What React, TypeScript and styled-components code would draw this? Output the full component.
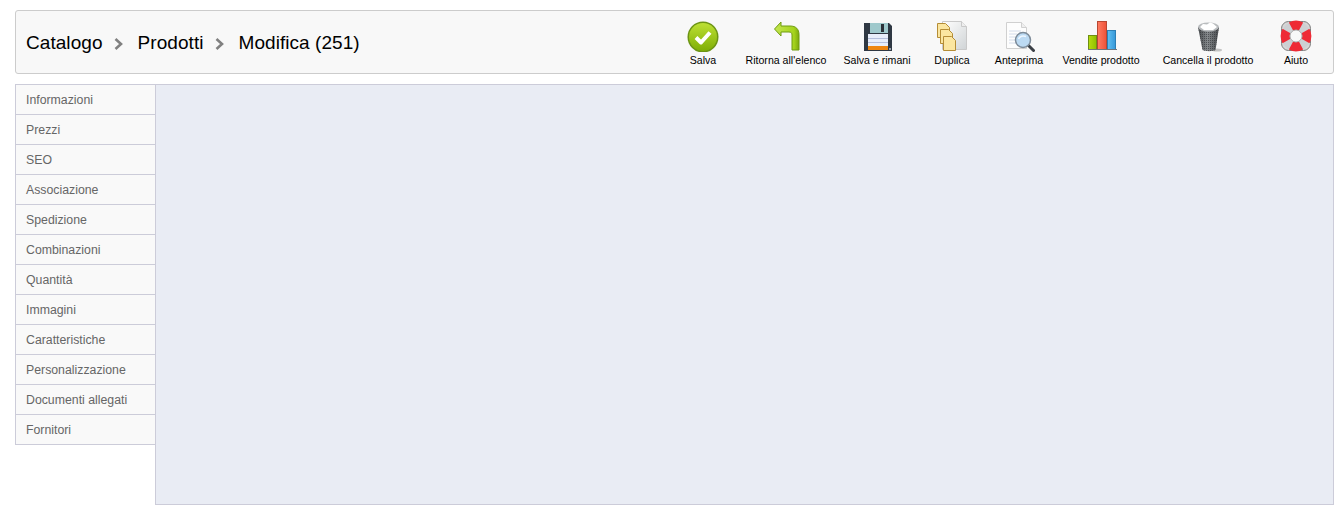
import React from "react";
import styled, { createGlobalStyle } from "styled-components";

const GlobalStyle = createGlobalStyle`
  html, body {
    margin: 0;
    padding: 0;
    background: #fff;
    font-family: "Liberation Sans", Arial, sans-serif;
  }
`;

const Page = styled.div`
  padding: 10px 10px 10px 15px;
  box-sizing: border-box;
  width: 1344px;
  height: 515px;
  overflow: hidden;
`;

const Toolbar = styled.header`
  display: flex;
  align-items: center;
  justify-content: space-between;
  box-sizing: border-box;
  height: 64px;
  padding: 0 8px 0 10px;
  background: #f8f8f8;
  border: 1px solid #cccccc;
  border-radius: 3px;
`;

const Breadcrumb = styled.div`
  display: flex;
  align-items: center;
  margin-top: 1px;
  font-size: 19px;
  letter-spacing: 0.06px;
  color: #000;
`;

const Chevron = styled.svg`
  display: block;
  margin: 2px 15px 0 11px;
`;

const Tools = styled.nav`
  display: flex;
  align-self: flex-start;
`;

const Tool = styled.a<{ $w: number }>`
  display: flex;
  flex-direction: column;
  align-items: center;
  width: ${(p) => p.$w}px;
  padding-top: 9px;
  font-size: 10.6px;
  line-height: 12px;
  color: #000;
  white-space: nowrap;

  svg {
    display: block;
    margin-bottom: 2px;
  }
`;

const Body = styled.div`
  display: flex;
  margin-top: 10px;
`;

const Tabs = styled.ul`
  list-style: none;
  box-sizing: border-box;
  margin: 0;
  padding: 0;
  width: 140px;
  flex: none;
  align-self: flex-start;
  border-left: 1px solid #ccccd9;
`;

const Tab = styled.li`
  box-sizing: border-box;
  height: 30px;
  padding-left: 10px;
  font-size: 12.3px;
  line-height: 30px;
  color: #666666;
  background: #f9f9f9;
  border-bottom: 1px solid #ccccd9;

  &:first-child {
    height: 31px;
    border-top: 1px solid #ccccd9;
  }
`;

const Panel = styled.main`
  flex: 1;
  box-sizing: border-box;
  height: 421px;
  background: #e9ecf4;
  border: 1px solid #ccccd9;
`;

const SaveIcon = () => (
  <svg width="32" height="32" viewBox="0 0 32 32">
    <defs>
      <linearGradient id="saveFill" x1="0" y1="0" x2="0" y2="1">
        <stop offset="0" stopColor="#bde034" />
        <stop offset="1" stopColor="#7fae06" />
      </linearGradient>
    </defs>
    <circle cx="16" cy="17" r="15.5" fill="#6c9414" />
    <circle cx="16" cy="17" r="14" fill="url(#saveFill)" />
    <path d="M9 17.5l5 5 9-10" fill="none" stroke="#fff" strokeWidth="4" strokeLinejoin="round" />
  </svg>
);

const BackIcon = () => (
  <svg width="32" height="32" viewBox="0 0 32 32">
    <defs>
      <linearGradient id="backFill" x1="0" y1="0" x2="1" y2="0">
        <stop offset="0" stopColor="#c4e650" />
        <stop offset="0.8" stopColor="#a5d31c" />
        <stop offset="1" stopColor="#7da80e" />
      </linearGradient>
    </defs>
    <path
      d="M4.5 9L11 2v4h9c6 0 9 3 9 9v15h-7V15c0-2-1-3-3-3h-8v4z"
      fill="url(#backFill)"
      stroke="#6f9c10"
      strokeWidth="1"
      strokeLinejoin="round"
    />
  </svg>
);

const DiskIcon = () => (
  <svg width="32" height="32" viewBox="0 0 32 32">
    <path d="M3 3h25l3 3v25H3z" fill="#2f3843" />
    <rect x="9" y="3" width="18" height="10" fill="#9fc9cc" />
    <rect x="20" y="4" width="3" height="8" fill="#2b3138" />
    <rect x="7" y="14" width="20" height="14" fill="#e8eefa" />
    <path d="M7 18.5h20M7 22.5h20" stroke="#b4bfdc" strokeWidth="1" />
    <rect x="7" y="26" width="20" height="4" fill="#ee8610" />
    <rect x="28" y="28" width="2" height="2" fill="#9aa2ac" />
  </svg>
);

const Sheet = ({ x, y }: { x: number; y: number }) => (
  <path
    d={`M${x} ${y}h8l4 4v10h-12z`}
    fill="#fbe6a0"
    stroke="#b58d36"
    strokeWidth="1"
  />
);

const CopyIcon = () => (
  <svg width="32" height="32" viewBox="0 0 32 32">
    <defs>
      <linearGradient id="copyFill" x1="0" y1="0" x2="1" y2="1">
        <stop offset="0" stopColor="#ffffff" />
        <stop offset="1" stopColor="#d0d4d6" />
      </linearGradient>
    </defs>
    <path d="M6.5 1.5h19l5 5v23h-24z" fill="url(#copyFill)" stroke="#c9c9c9" strokeWidth="1" />
    <path d="M25.5 1.5v5h5" fill="#eeeeee" stroke="#c9c9c9" strokeWidth="1" />
    <Sheet x={1.5} y={3.5} />
    <Sheet x={4.5} y={9.5} />
    <Sheet x={7.5} y={16.5} />
  </svg>
);

const PreviewIcon = () => (
  <svg width="32" height="32" viewBox="0 0 32 32">
    <path d="M3.5 2.5h15l5 5v21h-20z" fill="#fdfdfd" stroke="#d0d0d0" strokeWidth="1" />
    <path d="M18.5 2.5v5h5" fill="#efefef" stroke="#d0d0d0" strokeWidth="1" />
    <path d="M6 11h12M6 14h8M6 17h6M6 20h6M6 23h7" stroke="#d4dcea" strokeWidth="1" />
    <path d="M25.5 25.5l5 5" stroke="#3a3f45" strokeWidth="3" strokeLinecap="round" />
    <circle cx="20" cy="20" r="7.5" fill="#bcdaf3" stroke="#7d8b99" strokeWidth="1.5" />
    <path d="M15.5 19c1-2.500 4.500-4 7.500-2.500" fill="none" stroke="#eef7ff" strokeWidth="1.5" />
  </svg>
);

const ChartIcon = () => (
  <svg width="32" height="32" viewBox="0 0 32 32">
    <defs>
      <linearGradient id="barGreen" x1="0" y1="0" x2="1" y2="0">
        <stop offset="0" stopColor="#b6dc10" />
        <stop offset="1" stopColor="#8fbf00" />
      </linearGradient>
      <linearGradient id="barRed" x1="0" y1="0" x2="1" y2="0">
        <stop offset="0" stopColor="#ff7c62" />
        <stop offset="1" stopColor="#ee5238" />
      </linearGradient>
      <linearGradient id="barBlue" x1="0" y1="0" x2="1" y2="0">
        <stop offset="0" stopColor="#62c0f2" />
        <stop offset="1" stopColor="#3597d8" />
      </linearGradient>
    </defs>
    <rect x="3.5" y="15.5" width="8" height="14" fill="url(#barGreen)" stroke="#6f8f12" strokeWidth="1" />
    <rect x="12.5" y="1.5" width="9" height="28" fill="url(#barRed)" stroke="#b84732" strokeWidth="1" />
    <rect x="22.5" y="10.5" width="8" height="19" fill="url(#barBlue)" stroke="#2d7fb4" strokeWidth="1" />
    <rect x="3" y="29" width="29" height="1" fill="#6f757c" />
  </svg>
);

const TrashIcon = () => (
  <svg width="32" height="32" viewBox="0 0 32 32">
    <defs>
      <linearGradient id="binFill" x1="0" y1="0" x2="1" y2="0">
        <stop offset="0" stopColor="#45484b" />
        <stop offset="0.45" stopColor="#85898c" />
        <stop offset="1" stopColor="#484b4e" />
      </linearGradient>
      <pattern id="binMesh" width="2" height="2" patternUnits="userSpaceOnUse">
        <rect width="1" height="1" fill="#2e3033" opacity="0.6" />
      </pattern>
    </defs>
    <ellipse cx="25" cy="30" rx="5" ry="1.5" fill="#c4c4c4" />
    <path d="M6 7l4.500 23c3 1.500 10 1.500 13 0L27 7z" fill="url(#binFill)" />
    <path d="M6 7l4.500 23c3 1.500 10 1.500 13 0L27 7z" fill="url(#binMesh)" />
    <ellipse cx="16.5" cy="7" rx="10.500" ry="4.500" fill="#b9bcbe" />
    <path d="M8 7l3-3 4 .5 3-2 3 1 4 3.500-4 3-9 0z" fill="#ffffff" />
  </svg>
);

const HelpIcon = () => (
  <svg width="32" height="32" viewBox="0 0 32 32">
    <rect x="1.5" y="1.5" width="29" height="29" rx="7" fill="#d6d6d6" stroke="#7e7e7e" strokeWidth="1" />
    <circle cx="16" cy="16" r="10.5" fill="none" stroke="#cdd0d3" strokeWidth="9" />
    <g fill="none" stroke="#ee2a35" strokeWidth="9">
      <path d="M11 6.500a10.500 10.500 0 0 1 10 0" />
      <path d="M25.500 11a10.500 10.500 0 0 1 0 10" />
      <path d="M21 25.500a10.500 10.500 0 0 1-10 0" />
      <path d="M6.500 21a10.500 10.500 0 0 1 0-10" />
    </g>
    <circle cx="16" cy="16" r="6" fill="#f8f8f8" stroke="#9a9a9a" strokeWidth="0.8" />
  </svg>
);

const tools = [
  { label: "Salva", w: 68, icon: <SaveIcon /> },
  { label: "Ritorna all'elenco", w: 98, icon: <BackIcon /> },
  { label: "Salva e rimani", w: 84, icon: <DiskIcon /> },
  { label: "Duplica", w: 66, icon: <CopyIcon /> },
  { label: "Anteprima", w: 68, icon: <PreviewIcon /> },
  { label: "Vendite prodotto", w: 96, icon: <ChartIcon /> },
  { label: "Cancella il prodotto", w: 118, icon: <TrashIcon /> },
  { label: "Aiuto", w: 58, icon: <HelpIcon /> },
];

const tabs = [
  "Informazioni",
  "Prezzi",
  "SEO",
  "Associazione",
  "Spedizione",
  "Combinazioni",
  "Quantità",
  "Immagini",
  "Caratteristiche",
  "Personalizzazione",
  "Documenti allegati",
  "Fornitori",
];

const Arrow = () => (
  <Chevron width="9" height="12" viewBox="0 0 9 12">
    <path d="M1.5 1l5.500 5-5.500 5" fill="none" stroke="#808080" strokeWidth="2.6" />
  </Chevron>
);

export default function App() {
  return (
    <Page>
      <GlobalStyle />
      <Toolbar>
        <Breadcrumb>
          Catalogo
          <Arrow />
          Prodotti
          <Arrow />
          Modifica (251)
        </Breadcrumb>
        <Tools>
          {tools.map((t) => (
            <Tool key={t.label} $w={t.w}>
              {t.icon}
              {t.label}
            </Tool>
          ))}
        </Tools>
      </Toolbar>
      <Body>
        <Tabs>
          {tabs.map((t) => (
            <Tab key={t}>{t}</Tab>
          ))}
        </Tabs>
        <Panel />
      </Body>
    </Page>
  );
}
